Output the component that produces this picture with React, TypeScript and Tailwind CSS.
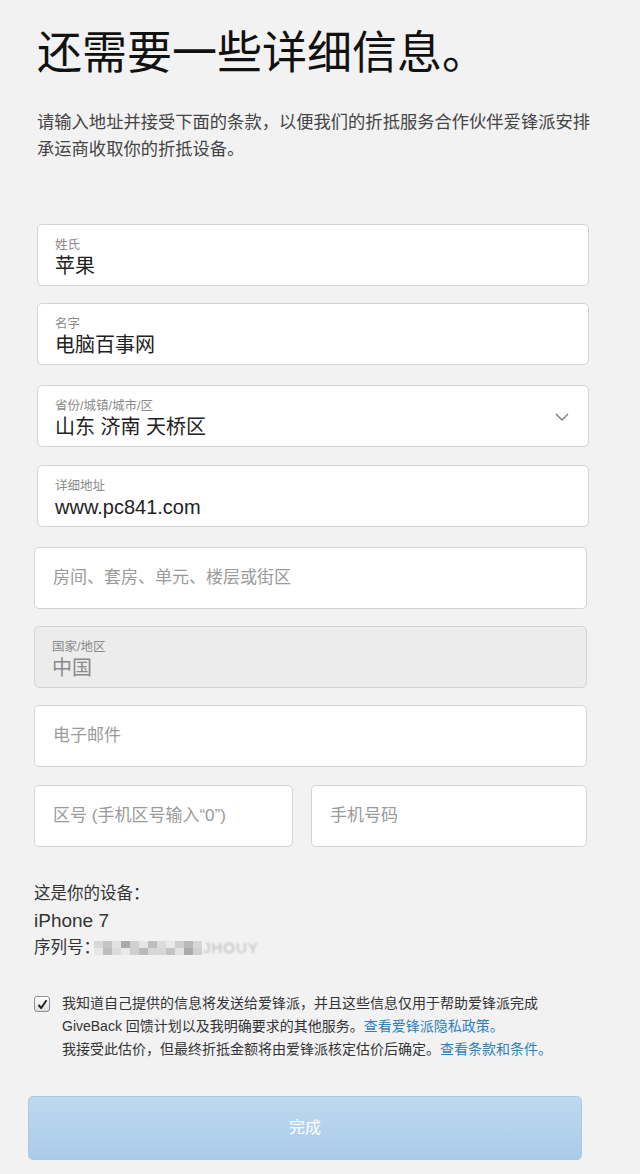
import React from "react";

const cjk = { fontFamily: '"Liberation Sans", "Noto Sans CJK SC", sans-serif' };

function LabeledField({ label, value, disabled, chevron }: { label: string; value: string; disabled?: boolean; chevron?: boolean }) {
  return (
    <div
      className={`relative h-[62px] rounded-[5px] border border-[#d4d4d6] pl-[17px] pt-[12px] ${disabled ? "bg-[#ececed]" : "bg-white"}`}
    >
      <div className="text-[12.5px] leading-[16px] text-[#8a8a8a]">{label}</div>
      <div className={`text-[20px] leading-[26px] ${disabled ? "text-[#8a8a8a]" : "text-[#222]"}`}>{value}</div>
      {chevron && (
        <svg className="absolute right-[19px] top-[27px]" width="14" height="8" viewBox="0 0 14 8" fill="none">
          <polyline points="1,1 7,7 13,1" stroke="#7a7a7a" strokeWidth="1.3" />
        </svg>
      )}
    </div>
  );
}

function PlaceholderField({ text, className = "" }: { text: string; className?: string }) {
  return (
    <div className={`flex h-[62px] items-center rounded-[5px] border border-[#d4d4d6] bg-white pl-[18px] text-[17px] text-[#9a9a9a] ${className}`}>
      {text}
    </div>
  );
}

function Mosaic() {
  const shades = ["#d8d8d8", "#c4c4c4", "#e2e2e2", "#aaaaaa", "#d0d0d0", "#e6e6e6", "#bdbdbd", "#dcdcdc", "#e9e9e9", "#cfcfcf", "#b9b9b9", "#d6d6d6"];
  return (
    <span className="-ml-[6px] inline-flex items-center">
      {shades.map((c, i) => (
        <span key={i} className="inline-flex flex-col">
          <span className="block h-[7px] w-[9px]" style={{ background: c }} />
          <span className="block h-[7px] w-[9px]" style={{ background: shades[(i + 5) % shades.length] }} />
        </span>
      ))}
      <span className="ml-[1px] text-[15px] tracking-[1px] text-[#b9b9b9] blur-[1.2px]">JHOUY</span>
    </span>
  );
}

export default function App() {
  return (
    <div className="min-h-[1174px] w-[640px] bg-[#f2f2f3] pb-[14px] pt-[31px]" style={cjk}>
      <h1 className="ml-[37px] text-[45px] font-normal leading-[45px] text-[#111]">还需要一些详细信息。</h1>
      <p className="ml-[37px] mt-[33px] w-[570px] text-[17.3px] leading-[27px] text-[#444]">
        请输入地址并接受下面的条款，以便我们的折抵服务合作伙伴爱锋派安排承运商收取你的折抵设备。
      </p>

      <div className="mt-[61px] flex flex-col">
        <div className="ml-[37px] w-[552px]">
          <LabeledField label="姓氏" value="苹果" />
        </div>
        <div className="ml-[37px] mt-[17px] w-[552px]">
          <LabeledField label="名字" value="电脑百事网" />
        </div>
        <div className="ml-[37px] mt-[20px] w-[552px]">
          <LabeledField label="省份/城镇/城市/区" value="山东 济南 天桥区" chevron />
        </div>
        <div className="ml-[37px] mt-[18px] w-[552px]">
          <LabeledField label="详细地址" value="www.pc841.com" />
        </div>
        <div className="ml-[34px] mt-[20px] w-[553px]">
          <PlaceholderField text="房间、套房、单元、楼层或街区" />
        </div>
        <div className="ml-[34px] mt-[17px] w-[553px]">
          <LabeledField label="国家/地区" value="中国" disabled />
        </div>
        <div className="ml-[34px] mt-[17px] w-[553px]">
          <PlaceholderField text="电子邮件" />
        </div>
        <div className="ml-[34px] mt-[18px] flex w-[553px] gap-[18px]">
          <PlaceholderField className="w-[259px]" text="区号 (手机区号输入“0”)" />
          <PlaceholderField className="flex-1" text="手机号码" />
        </div>
      </div>

      <div className="ml-[34px] mt-[33px] text-[#333]">
        <div className="text-[16.5px] leading-[27px]">这是你的设备：</div>
        <div className="text-[19px] leading-[27px]">iPhone 7</div>
        <div className="flex items-center text-[16.5px] leading-[27px]">
          序列号：
          <Mosaic />
        </div>
      </div>

      <div className="ml-[34px] mt-[31px] flex w-[560px] items-start gap-[12px]">
        <div className="mt-[4px] flex h-[16px] w-[16px] shrink-0 items-center justify-center rounded-[3px] border border-[#8e8e8e] bg-gradient-to-b from-white to-[#dedede]">
          <svg width="11" height="11" viewBox="0 0 11 11">
            <path d="M1.5 6 L4.2 9 L9.5 1.2" stroke="#222" strokeWidth="2" fill="none" strokeLinejoin="round" />
          </svg>
        </div>
        <div className="text-[14px] leading-[23px] text-[#333]">
          <div>我知道自己提供的信息将发送给爱锋派，并且这些信息仅用于帮助爱锋派完成</div>
          <div>
            GiveBack 回馈计划以及我明确要求的其他服务。<span className="text-[#2e7fba]">查看爱锋派隐私政策。</span>
          </div>
          <div>
            我接受此估价，但最终折抵金额将由爱锋派核定估价后确定。<span className="text-[#2e7fba]">查看条款和条件。</span>
          </div>
        </div>
      </div>

      <div className="ml-[28px] mt-[35px] flex h-[64px] w-[554px] items-center justify-center rounded-[5px] border border-[#a9c9e6] bg-gradient-to-b from-[#bed9f0] to-[#aacbe8] text-[16px] text-white">
        完成
      </div>
    </div>
  );
}
